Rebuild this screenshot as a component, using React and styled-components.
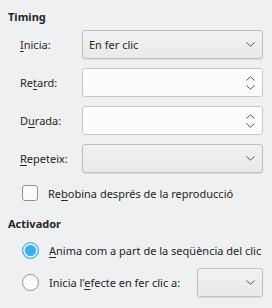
import { createGlobalStyle, styled } from "styled-components";

const Global = createGlobalStyle`
html, body {
  margin: 0;
  padding: 0;
  background: #eff0f1;
}
body {
  font-family: "Noto Sans", "DejaVu Sans", sans-serif;
  font-size: 11px;
  color: #232627;
}
`;

function Chevron({ up }) {
  return (
    <svg width="9" height="5" viewBox="0 0 9 5">
      <path
        d={up ? "M0.5 4.5 L4.5 0.8 L8.5 4.5" : "M0.5 0.5 L4.5 4.2 L8.5 0.5"}
        fill="none"
        stroke="#4f5254"
        strokeWidth="1"
      />
    </svg>
  );
}

function Mn({ text, at }) {
  return (
    <>
      {text.slice(0, at)}
      <U>{text[at]}</U>
      {text.slice(at + 1)}
    </>
  );
}

export default function App() {
  return (
    <>
      <Global />
      <Page>
        <Title>Timing</Title>
        <Form>
          <Label><Mn text="Inicia:" at={0} /></Label>
          <Combo>
            <span>En fer clic</span>
            <Chevron />
          </Combo>
          <Label><Mn text="Retard:" at={2} /></Label>
          <Spin>
            <Arrows>
              <Chevron up />
              <Chevron />
            </Arrows>
          </Spin>
          <Label><Mn text="Durada:" at={1} /></Label>
          <Spin>
            <Arrows>
              <Chevron up />
              <Chevron />
            </Arrows>
          </Spin>
          <Label><Mn text="Repeteix:" at={0} /></Label>
          <Combo>
            <span />
            <Chevron />
          </Combo>
        </Form>
        <CheckRow>
          <CheckBox />
          <span><Mn text="Rebobina després de la reproducció" at={2} /></span>
        </CheckRow>
        <Title $top={15}>Activador</Title>
        <RadioList>
          <RadioRow>
            <Radio $checked />
            <span><Mn text="Anima com a part de la seqüència del clic" at={0} /></span>
          </RadioRow>
          <RadioRow>
            <Radio />
            <span><Mn text="Inicia l'efecte en fer clic a:" at={9} /></span>
            <Combo $small>
              <span />
              <Chevron />
            </Combo>
          </RadioRow>
        </RadioList>
      </Page>
    </>
  );
}

const Page = styled.div`
width: 272px;
height: 308px;
box-sizing: border-box;
padding: 9px 9px 0 8px;
display: flex;
flex-direction: column;
`;

const Title = styled.div`
font-weight: 700;
line-height: 16px;
margin-top: ${(p) => p.$top || 0}px;
`;

const Form = styled.div`
display: grid;
grid-template-columns: 62px 181px;
grid-auto-rows: 29px;
row-gap: 9px;
margin-top: 5px;
padding-left: 12px;
`;

const Label = styled.div`
display: flex;
align-items: center;
`;

const U = styled.span`
text-decoration: underline;
text-underline-offset: 2px;
`;

const Combo = styled.div`
box-sizing: border-box;
height: 29px;
width: ${(p) => (p.$small ? "66px" : "auto")};
margin-left: ${(p) => (p.$small ? "auto" : "0")};
display: flex;
align-items: center;
justify-content: space-between;
padding: 0 7px 0 6px;
border: 1px solid #bcbebf;
border-radius: 3px;
background: linear-gradient(#f2f2f2, #e9e9ea);
box-shadow: 0 1px 1px rgba(0, 0, 0, 0.08);
`;

const Spin = styled.div`
box-sizing: border-box;
height: 29px;
display: flex;
align-items: center;
justify-content: flex-end;
padding-right: 7px;
border: 1px solid #c4c6c7;
border-radius: 3px;
background: #fcfcfc;
`;

const Arrows = styled.div`
display: flex;
flex-direction: column;
gap: 4px;
`;

const CheckRow = styled.div`
display: flex;
align-items: center;
gap: 10px;
margin-top: 12px;
padding-left: 14px;
height: 16px;
`;

const CheckBox = styled.div`
width: 16px;
height: 16px;
box-sizing: border-box;
border: 1px solid #8f9192;
border-radius: 3px;
background: #fcfcfc;
`;

const RadioList = styled.div`
display: flex;
flex-direction: column;
gap: 9px;
margin-top: 10px;
padding-left: 14px;
`;

const RadioRow = styled.div`
display: flex;
align-items: center;
gap: 10px;
min-height: 17px;
`;

const Radio = styled.div`
width: 17px;
height: 17px;
flex: none;
box-sizing: border-box;
border-radius: 50%;
border: 1px solid ${(p) => (p.$checked ? "#3daee9" : "#8f9192")};
background: ${(p) => (p.$checked ? "#3daee9" : "#fcfcfc")};
box-shadow: ${(p) => (p.$checked ? "inset 0 0 0 2px #d6eefb" : "none")};
`;
